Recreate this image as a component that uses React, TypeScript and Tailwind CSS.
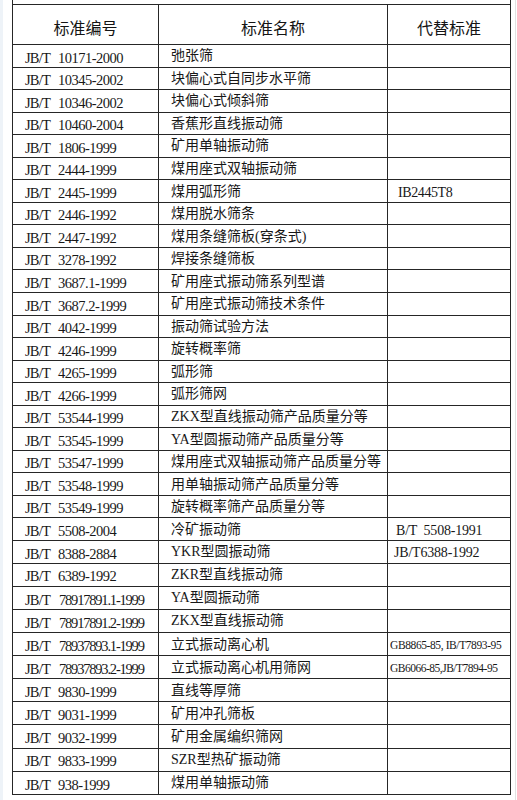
import React from "react";

type Row = { code: string; name: string; rep?: string; repCls?: string; tall?: boolean; tight?: boolean };

const rows: Row[] = [
  { code: "10171-2000", name: "弛张筛" },
  { code: "10345-2002", name: "块偏心式自同步水平筛" },
  { code: "10346-2002", name: "块偏心式倾斜筛" },
  { code: "10460-2004", name: "香蕉形直线振动筛" },
  { code: "1806-1999", name: "矿用单轴振动筛" },
  { code: "2444-1999", name: "煤用座式双轴振动筛" },
  { code: "2445-1999", name: "煤用弧形筛", rep: "IB2445T8", repCls: "pl-[10px] text-[14px] tracking-[-0.4px]" },
  { code: "2446-1992", name: "煤用脱水筛条" },
  { code: "2447-1992", name: "煤用条缝筛板(穿条式)" },
  { code: "3278-1992", name: "焊接条缝筛板" },
  { code: "3687.1-1999", name: "矿用座式振动筛系列型谱" },
  { code: "3687.2-1999", name: "矿用座式振动筛技术条件" },
  { code: "4042-1999", name: "振动筛试验方法" },
  { code: "4246-1999", name: "旋转概率筛" },
  { code: "4265-1999", name: "弧形筛" },
  { code: "4266-1999", name: "弧形筛网" },
  { code: "53544-1999", name: "ZKX型直线振动筛产品质量分等" },
  { code: "53545-1999", name: "YA型圆振动筛产品质量分等" },
  { code: "53547-1999", name: "煤用座式双轴振动筛产品质量分等" },
  { code: "53548-1999", name: "用单轴振动筛产品质量分等" },
  { code: "53549-1999", name: "旋转概率筛产品质量分等" },
  { code: "5508-2004", name: "冷矿振动筛", rep: "B/T  5508-1991", repCls: "pl-[8px] text-[14px] tracking-[-0.2px]" },
  { code: "8388-2884", name: "YKR型圆振动筛", rep: "JB/T6388-1992", repCls: "pl-[6px] text-[14px] tracking-[-0.2px]" },
  { code: "6389-1992", name: "ZKR型直线振动筛", tall: true },
  { code: "78917891.1-1999", name: "YA型圆振动筛", tall: true, tight: true },
  { code: "78917891.2-1999", name: "ZKX型直线振动筛", tall: true, tight: true },
  { code: "78937893.1-1999", name: "立式振动离心机", rep: "GB8865-85, IB/T7893-95", repCls: "pl-[2px] text-[11.5px] tracking-[-0.4px]", tall: true, tight: true },
  { code: "78937893.2-1999", name: "立式振动离心机用筛网", rep: "GB6066-85,JB/T7894-95", repCls: "pl-[2px] text-[11.5px] tracking-[-0.5px]", tall: true, tight: true },
  { code: "9830-1999", name: "直线等厚筛", tall: true },
  { code: "9031-1999", name: "矿用冲孔筛板", tall: true },
  { code: "9032-1999", name: "矿用金属编织筛网", tall: true },
  { code: "9833-1999", name: "SZR型热矿振动筛", tall: true },
  { code: "938-1999", name: "煤用单轴振动筛", tall: true },
];

const serif = "font-['Liberation_Serif','Noto_Sans_CJK_SC',serif]";

export default function App() {
  return (
    <div className="min-h-[800px] w-[516px] bg-white border-l-[3px] border-l-[#eef3f8] border-r border-r-[#e2e2e2]">
      <div className="ml-[9px] w-[499px] border-x border-[#262626] pt-[4px]">
        <div className="border-t border-[#262626]">
          {/* header */}
          <div className="grid grid-cols-[146px_229px_122px] h-[40px] border-b border-[#262626] font-['Noto_Sans_CJK_SC',sans-serif] text-[16px] text-[#141414]">
            <div className="flex items-center justify-center border-r border-[#262626] pt-[4px]">标准编号</div>
            <div className="flex items-center justify-center border-r border-[#262626] pt-[4px]">标准名称</div>
            <div className="flex items-center justify-center pt-[4px]">代替标准</div>
          </div>
          {rows.map((r, i) => (
            <div
              key={i}
              className={`grid grid-cols-[146px_229px_122px] border-b border-[#262626] text-[#181818] ${serif} ${
                r.tall ? "h-[23.13px]" : "h-[22.55px]"
              }`}
            >
              <div className="flex items-center border-r border-[#262626] pl-[12px] pt-[4px] text-[14.5px] leading-none whitespace-pre">
                <span className="tracking-[-0.8px]">JB/T</span>
                <span className={r.tight ? "ml-[9px] tracking-[-1.2px]" : "ml-[8px] tracking-[-0.5px]"}>{r.code}</span>
              </div>
              <div className="flex items-center border-r border-[#262626] pl-[12px] pt-[1px] text-[14px] leading-none whitespace-pre">
                {r.name}
              </div>
              <div className={`flex items-center pt-[3px] leading-none whitespace-pre ${r.repCls ?? ""}`}>
                {r.rep ?? ""}
              </div>
            </div>
          ))}
        </div>
      </div>
    </div>
  );
}
